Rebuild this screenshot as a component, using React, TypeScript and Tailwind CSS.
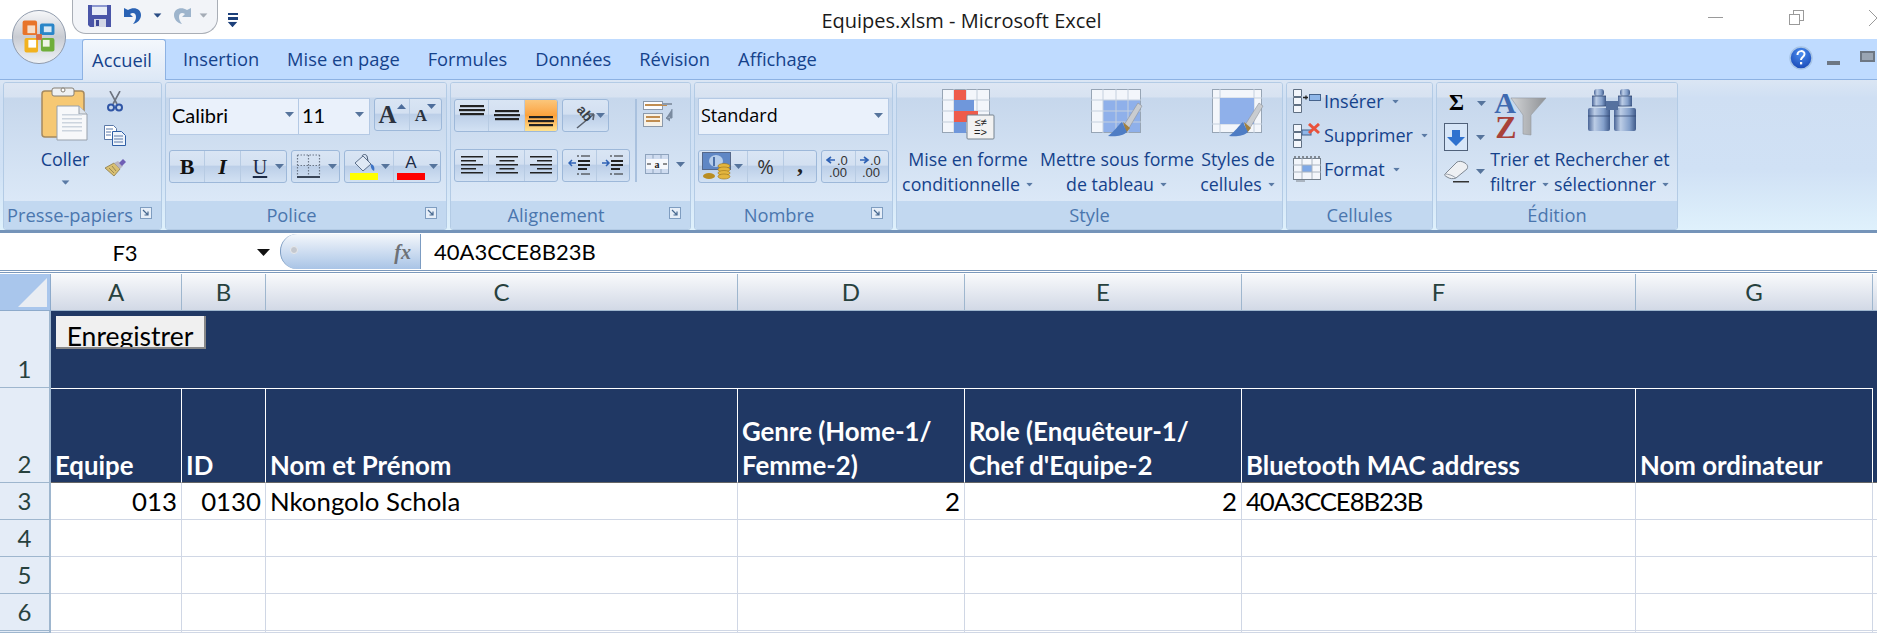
import React from 'react';

const Caret = ({ color = '#56749c', className = '' }: { color?: string; className?: string }) => (
  <svg width="9" height="5" viewBox="0 0 9 5" className={`shrink-0 ${className}`}>
    <path d="M0 0h9L4.500 5z" fill={color} />
  </svg>
);

const Launcher = () => (
  <svg width="12" height="12" viewBox="0 0 12 12" className="shrink-0 -mt-[5px]">
    <rect x="0.500" y="0.500" width="11" height="11" fill="#e6eef8" stroke="#7f9dc0" />
    <path d="M3 3l5 5M8 4.500V8H4.500" fill="none" stroke="#47688f" strokeWidth="1.200" />
  </svg>
);

const Group = ({ w, caption, left, launcher = true, children }: { w: string; caption: string; left?: boolean; launcher?: boolean; children: React.ReactNode }) => (
  <section className={`${w} h-[148px] shrink-0 flex flex-col rounded-[3px] border border-[#b3cbe5] overflow-hidden`}>
    <div className="h-[118px] shrink-0 bg-[linear-gradient(#dde6f3_0,#d7e2f1_14px,#c6d7ec_15px,#dbe8f7_100%)]">{children}</div>
    <div className={`flex-1 flex items-center bg-[#c2d8f0] text-[#4a76ae] text-[18.300px] ${left ? 'pl-[3px]' : launcher ? 'pl-[8px]' : 'pl-0'} ${launcher ? 'pr-[9px]' : 'pr-0'}`}>
      <span className={`flex-1 ${left ? 'text-left' : 'text-center'} ${launcher && !left ? 'pr-[16px]' : ''} whitespace-nowrap`}>{caption}</span>
      {launcher && <Launcher />}
    </div>
  </section>
);

const ButtonGroup = ({ w, children }: { w: string; children: React.ReactNode }) => (
  <div className={`${w} h-[33px] shrink-0 flex rounded-[3px] border border-[#9db8d9] overflow-hidden bg-[linear-gradient(#d9e5f4_0,#d3e0f1_45%,#bccfe8_50%,#d2e1f3_100%)]`}>
    {children}
  </div>
);

const Seg = ({ className = '', children }: { className?: string; children?: React.ReactNode }) => (
  <div className={`h-full flex items-center justify-center border-r border-[#b7cbe3] last:border-r-0 ${className}`}>{children}</div>
);

const Lines = ({ align = 'left', gap = 4, y = 1 }: { align?: 'left' | 'center' | 'right'; gap?: number; y?: number }) => {
  const widths = [22, 15, 22, 15, 22];
  return (
    <svg width="24" height="22" viewBox="0 0 24 22">
      {widths.map((lw, i) => {
        const x = align === 'left' ? 1 : align === 'right' ? 23 - lw : 12 - lw / 2;
        return <rect key={i} x={x} y={y + i * gap} width={lw} height="1.500" fill="#222" />;
      })}
    </svg>
  );
};

const VAlign = ({ top }: { top: number }) => (
  <svg width="26" height="24" viewBox="0 0 26 24">
    {[0, 1, 2].map((i) => (
      <rect key={i} x={i === 1 ? 0 : 1} y={top + i * 4} width={i === 1 ? 26 : 24} height="2.200" fill="#222" />
    ))}
  </svg>
);

const OrbIcon = () => (
  <svg width="56" height="56" viewBox="0 0 58 58">
    <defs>
      <linearGradient id="orb" x1="0" y1="0" x2="0" y2="1">
        <stop offset="0" stopColor="#f7f8fa" />
        <stop offset="0.5" stopColor="#c9ccd3" />
        <stop offset="1" stopColor="#eef2f7" />
      </linearGradient>
    </defs>
    <circle cx="29" cy="29" r="27.500" fill="url(#orb)" stroke="#8d98aa" />
    <rect x="12" y="12" width="15" height="15" rx="2" fill="#e8742a" />
    <rect x="17" y="17" width="8" height="8" fill="#f6ddc8" />
    <rect x="30" y="15" width="15" height="12" rx="2" fill="#2a86c8" />
    <rect x="34" y="18" width="8" height="6" fill="#d8e8f4" />
    <rect x="14" y="30" width="14" height="15" rx="2" fill="#f2b21f" />
    <rect x="18" y="32" width="8" height="8" fill="#fff" />
    <rect x="31" y="30" width="14" height="14" rx="2" fill="#6fae3a" />
    <rect x="33" y="32" width="7" height="7" fill="#eef5e6" />
    <rect x="26" y="26" width="6" height="6" fill="#d96a40" />
  </svg>
);

const SaveIcon = () => (
  <svg width="23" height="23" viewBox="0 0 23 23">
    <path d="M0 1h23v22H2l-2-2z" fill="#4a55a8" />
    <rect x="4" y="1" width="15" height="10" fill="#e8edf6" />
    <rect x="4" y="1" width="15" height="2" fill="#8d98d0" />
    <rect x="6" y="15" width="12" height="8" fill="#d2d6e6" />
    <rect x="8" y="16" width="3" height="6" fill="#3d4796" />
  </svg>
);

const UndoIcon = ({ color = '#2a62b4' }: { color?: string }) => (
  <svg width="19" height="19" viewBox="0 0 19 19">
    <path d="M1 2v9h9L7 8c3-2 6-1 6 3 0 2-1 5-3 7 5-1 8-5 8-9 0-6-7-9-13-5z" fill={color} />
  </svg>
);

const UndoIconMirror = () => (
  <div className="-scale-x-100"><UndoIcon color="#9db4cc" /></div>
);

const PasteIcon = () => (
  <svg width="48" height="54" viewBox="0 0 48 54">
    <rect x="1" y="4" width="42" height="46" rx="3" fill="#f6c873" stroke="#a5895f" strokeWidth="1.500" />
    <rect x="11" y="1" width="22" height="8" rx="2" fill="#eef0f2" stroke="#857f74" />
    <circle cx="22" cy="3" r="2" fill="#fff" stroke="#857f74" />
    <path d="M16 19h22l8 8v26H16z" fill="#f7f8fa" stroke="#97a0ab" />
    <path d="M38 19v8h8" fill="#dfe4ea" stroke="#97a0ab" />
    {[27, 31, 35, 39, 43].map((y) => (
      <rect key={y} x="21" y={y} width="20" height="1.500" fill="#ccd4de" />
    ))}
  </svg>
);

const Scissors = () => (
  <svg width="16" height="21" viewBox="0 0 16 21">
    <path d="M3 0l7 13M13 0L6 13" stroke="#6d7480" strokeWidth="1.600" fill="none" />
    <circle cx="4" cy="16.500" r="3" fill="none" stroke="#2f55a5" strokeWidth="2" />
    <circle cx="12" cy="16.500" r="3" fill="none" stroke="#2f55a5" strokeWidth="2" />
  </svg>
);

const CopyIcon = () => (
  <svg width="22" height="21" viewBox="0 0 22 21">
    <path d="M.5.5h9l3 3v11H.5z" fill="#fff" stroke="#5b79a8" />
    <path d="M8.500 6.500h9l4 4v10h-13z" fill="#eef4fb" stroke="#2f5fa6" />
    <path d="M2 4h7M2 7h5M2 10h5M10 11h9M10 14h9M10 17h9" stroke="#5b79a8" />
  </svg>
);

const PainterIcon = () => (
  <svg width="21" height="18" viewBox="0 0 21 18">
    <path d="M0 9l9-5 6 6-6 7z" fill="#d8bf72" stroke="#8b7a48" strokeWidth=".800" />
    <path d="M9 4l6 6 3-3-5-5z" fill="#b9b6c4" />
    <path d="M14 4l4-4 3 3-4 4z" fill="#6f5fb5" />
    <path d="M4 9l5 5M7 7l4 5" stroke="#8b7a48" strokeWidth=".800" />
  </svg>
);

const BordersIcon = () => (
  <svg width="25" height="25" viewBox="0 0 25 25">
    <path d="M1.500 1h22M1.500 11.500h22M1.500 1v21M12.500 1v21M23.500 1v21" stroke="#6b7686" strokeWidth="1.200" strokeDasharray="1.500 1.500" fill="none" />
    <rect x="1" y="22" width="23" height="2" fill="#3a4658" />
  </svg>
);

const FillIcon = () => (
  <svg width="29" height="26" viewBox="0 0 29 26">
    <path d="M5 9l8-7 8 8-8 7z" fill="#dfe8f4" stroke="#5b6f8b" />
    <path d="M12 2c1-2 4-2 5 0l1 5" fill="none" stroke="#4c5d75" />
    <path d="M21 10c3 1 4 4 3 7-2-1-4-4-3-7z" fill="#3d73c5" />
    <rect y="19" width="28" height="7" fill="#ffff00" />
  </svg>
);

const FontColorIcon = () => (
  <svg width="29" height="7" viewBox="0 0 29 7" className="mt-[1px]">
    <rect width="28" height="7" fill="#ff0000" />
  </svg>
);

const OrientIcon = () => (
  <svg width="28" height="30" viewBox="0 -2 28 30">
    <path d="M10 25L27 11M27 11h-6M27 11l-1 6" stroke="#58616e" strokeWidth="1.600" fill="none" />
    <text x="0" y="0" transform="translate(9 7) rotate(50)" fontSize="14" fontWeight="700" fontFamily="Liberation Sans, sans-serif" fill="#3a3f47">ab</text>
  </svg>
);

const WrapIcon = () => (
  <svg width="30" height="28" viewBox="0 0 30 28">
    <rect x="0.500" y="2.500" width="19" height="8" fill="#fbfcfe" stroke="#8b99ab" />
    <rect x="2" y="5" width="22" height="2" fill="#c08d51" />
    <path d="M19 5h10" stroke="#8b99ab" strokeWidth="2" />
    <rect x="0.500" y="14.500" width="19" height="13" fill="#f7f2e8" stroke="#8b99ab" />
    <path d="M3 18h14M3 22h14" stroke="#c08d51" strokeWidth="2" />
    <path d="M29 10v9h-6M27 17l-4 2 4 3" fill="#7b8ba0" stroke="#7b8ba0" />
  </svg>
);

const MergeIcon = () => (
  <svg width="24" height="20" viewBox="0 0 24 20">
    <rect x="0.500" y="0.500" width="23" height="19" fill="#f6f8fc" stroke="#8ea3bd" />
    <rect x="1" y="1" width="22" height="4" fill="#cfdcf0" />
    <rect x="1" y="15" width="22" height="4" fill="#cfdcf0" />
    <path d="M8 .5v4M16 .5v4M8 15v4M16 15v4" stroke="#8ea3bd" />
    <text x="12" y="13.500" textAnchor="middle" fontSize="10" fontWeight="700" fontFamily="Liberation Serif, serif" fill="#222">a</text>
    <path d="M2 10h4M22 10h-4" stroke="#222" />
  </svg>
);

const CurrencyIcon = () => (
  <svg width="29" height="29" viewBox="0 0 29 29">
    <rect x="0.500" y="0.500" width="28" height="17" fill="#5f87c5" stroke="#55688a" />
    <ellipse cx="14" cy="9" rx="7" ry="6" fill="#b5cdeb" />
    <rect x="11" y="5" width="2" height="9" fill="#4b70a8" />
    <ellipse cx="7" cy="24" rx="6" ry="3" fill="#b98d22" />
    {[14, 17.500, 21, 24.500].map((y) => (
      <ellipse key={y} cx="22" cy={y} rx="6" ry="2.500" fill="#e3b53e" stroke="#9a741c" strokeWidth=".600" />
    ))}
  </svg>
);

const DecimalIcon = ({ more }: { more: boolean }) => (
  <svg width="26" height="25" viewBox="0 0 26 25">
    <path d={more ? 'M1 6h8M5 3L1 6l4 3' : 'M1 6h8M5 3l4 3-4 3'} fill="none" stroke="#2f62b5" strokeWidth="1.600" />
    <text x="11" y="11" fontSize="13" fontFamily="Liberation Sans, sans-serif" fill="#333">.0</text>
    <text x="3" y="23" fontSize="13" fontFamily="Liberation Sans, sans-serif" fill="#333">.00</text>
  </svg>
);

const ConditionalIcon = () => (
  <svg width="53" height="51" viewBox="0 0 53 51">
    <rect x="0.500" y="0.500" width="47" height="43" fill="#f3f6fb" stroke="#97a5b5" />
    <path d="M0 11h48M0 22h48M0 33h48M12 0v44M24 0v44M35 0v44" stroke="#c1ccd9" />
    <rect x="12" y="1" width="12" height="10" fill="#ee5b4a" />
    <rect x="12" y="11" width="20" height="11" fill="#6f97db" />
    <rect x="12" y="22" width="24" height="11" fill="#ee5b4a" />
    <rect x="12" y="33" width="12" height="11" fill="#6f97db" />
    <rect x="25" y="26" width="27" height="24" rx="1" fill="#f2f2f2" stroke="#75828f" />
    <text x="38.500" y="37" textAnchor="middle" fontSize="11" fontFamily="Liberation Sans, sans-serif" fill="#222">≤≠</text>
    <text x="38.500" y="47" textAnchor="middle" fontSize="11" fontFamily="Liberation Sans, sans-serif" fill="#222">=&gt;</text>
  </svg>
);

const Brush = () => (
  <>
    <path d="M33 36l14-22 4 3-13 22z" fill="#c9ccd0" stroke="#8e949b" strokeWidth=".600" />
    <path d="M32 33l7 6-4 5z" fill="#a2803e" />
    <path d="M31 33c-4 3-8 10-14 14 7 1 15 0 19-4z" fill="#4f7dc4" />
  </>
);

const TableIcon = () => (
  <svg width="53" height="51" viewBox="0 0 53 51">
    <rect x="0.500" y="0.500" width="49" height="43" fill="#f3f6fb" stroke="#97a5b5" />
    <rect x="12" y="11" width="37" height="32" fill="#8fb0ea" />
    <path d="M0 11h50M0 22h50M0 33h50M12 0v44M25 0v44M37 0v44" stroke="#c5d0de" />
    <Brush />
  </svg>
);

const CellStyleIcon = () => (
  <svg width="53" height="51" viewBox="0 0 53 51">
    <rect x="0.500" y="0.500" width="49" height="43" fill="#f3f6fb" stroke="#97a5b5" />
    <path d="M0 9h50M0 35h50M8 0v44M42 0v44" stroke="#c5d0de" />
    <rect x="8" y="9" width="34" height="26" fill="#8fb0ea" />
    <Brush />
  </svg>
);

const InsertIcon = () => (
  <svg width="28" height="25" viewBox="0 0 28 25">
    <path d="M.5.500h8v7h-8zM.5 8.500h8v7h-8zM.5 16.500h8v7h-8z" fill="#f3f6fb" stroke="#5f6f82" />
    <rect x="16.500" y="5.500" width="11" height="6" fill="#8fb6e8" stroke="#45638c" />
    <path d="M10 8.500h5M13 6.500v4" stroke="#222" strokeWidth="1.300" />
  </svg>
);

const DeleteIcon = () => (
  <svg width="28" height="25" viewBox="0 0 28 25">
    <path d="M.5 1.500h8v7h-8zM.5 9.500h8v7h-8zM.5 17.500h8v7h-8z" fill="#f3f6fb" stroke="#5f6f82" />
    <rect x="9" y="7" width="9" height="5" fill="#8fb6e8" stroke="#45638c" />
    <path d="M16 1l10 9M26 1l-10 9" stroke="#e9523c" strokeWidth="3" />
  </svg>
);

const FormatIcon = () => (
  <svg width="28" height="28" viewBox="0 0 28 28">
    <rect x="0.500" y="3.500" width="27" height="21" fill="#f3f6fb" stroke="#737f8c" />
    <rect x="9" y="10" width="10" height="7" fill="#7ea8e6" />
    <path d="M0 10h28M0 17h28M9 3v21M19 3v21" stroke="#aab4c0" />
    <path d="M1 2h26" stroke="#333" strokeDasharray="2 2" />
    <path d="M3 25h9v2H3z" fill="#aab4c0" />
  </svg>
);

const FillDownIcon = () => (
  <svg width="24" height="28" viewBox="0 0 24 28">
    <rect x="0.500" y="0.500" width="23" height="27" fill="#d7e6f8" stroke="#50617a" />
    <path d="M8 7h8v7h5l-9 9-9-9h5z" fill="#2f72cf" />
  </svg>
);

const EraserIcon = () => (
  <svg width="25" height="23" viewBox="0 0 25 23">
    <path d="M1 14L13 2c2-1 5-1 8 1s3 4 2 6L12 18c-3 1-6 1-9-1s-3-2-2-3z" fill="#eef0f3" stroke="#7e8792" />
    <path d="M1 14c3 0 7 1 11 4" fill="none" stroke="#9aa3ae" />
    <rect x="9" y="21" width="16" height="1.500" fill="#333" />
  </svg>
);

const SortIcon = () => (
  <svg width="53" height="60" viewBox="0 -3 53 60" className="-mt-[3px]">
    <defs>
      <linearGradient id="funnel" x1="0" y1="0" x2="1" y2="0">
        <stop offset="0" stopColor="#d2d4d6" />
        <stop offset="1" stopColor="#8f9296" />
      </linearGradient>
    </defs>
    <path d="M17 9h35L37 26v20l-8-1V26z" fill="url(#funnel)" stroke="#94989d" strokeWidth=".600" />
    <text x="11" y="24" textAnchor="middle" fontSize="30" fontWeight="700" fontFamily="Liberation Serif, serif" fill="#3f6ab0">A</text>
    <text x="12" y="49" textAnchor="middle" fontSize="32" fontWeight="700" fontFamily="Liberation Serif, serif" fill="#a8423a">Z</text>
  </svg>
);

const BinocularsIcon = () => (
  <svg width="48" height="42" viewBox="0 0 48 42">
    <defs>
      <linearGradient id="bino" x1="0" y1="0" x2="1" y2="0">
        <stop offset="0" stopColor="#4a6597" />
        <stop offset="0.3" stopColor="#bccde6" />
        <stop offset="0.7" stopColor="#84a0cb" />
        <stop offset="1" stopColor="#3f5a8a" />
      </linearGradient>
    </defs>
    {[0, 26].map((x) => (
      <g key={x} transform={`translate(${x} 0)`}>
        <rect x="6" y="0" width="10" height="7" rx="3" fill="url(#bino)" />
        <rect x="4" y="7" width="14" height="10" fill="url(#bino)" />
        <rect x="0" y="19" width="22" height="23" rx="2" fill="url(#bino)" />
        <path d="M4 7h14M4 17h14M0 27h22" stroke="#2f456e" strokeWidth="1.200" opacity=".750" />
      </g>
    ))}
    <rect x="18" y="12" width="12" height="9" fill="#55719f" />
  </svg>
);

const HelpIcon = () => (
  <svg width="24" height="24" viewBox="0 0 24 24">
    <defs>
      <radialGradient id="help" cx="0.500" cy="0.300" r="0.800">
        <stop offset="0" stopColor="#4b8ef0" />
        <stop offset="1" stopColor="#123fae" />
      </radialGradient>
    </defs>
    <circle cx="12" cy="12" r="11" fill="url(#help)" stroke="#a7c4e6" strokeWidth="1.500" />
    <path d="M8.500 9c0-5 7-5 7-1 0 3-3.500 3-3.500 6" fill="none" stroke="#fff" strokeWidth="2" />
    <rect x="11" y="16" width="2.200" height="2.400" fill="#fff" />
  </svg>
);

const LabelButton = ({ w, icon, lines }: { w: string; icon: React.ReactNode; lines: [string, string] }) => (
  <div className={`${w} shrink-0 flex flex-col items-center text-[#15428b] text-[17.800px] leading-[25px] whitespace-nowrap`}>
    <div className="h-[63px] pt-[6px]">{icon}</div>
    <div className="mt-[1px]">{lines[0]}</div>
    <div className="flex items-center gap-[5px]">
      {lines[1]}
      <Caret color="#5a7aa5" className="scale-75" />
    </div>
  </div>
);

const CellAction = ({ icon, label }: { icon: React.ReactNode; label: string }) => (
  <div className="h-[34px] flex items-center gap-[3px] text-[#15428b] text-[18px] whitespace-nowrap">
    <div className="w-[28px] flex justify-center">{icon}</div>
    {label}
    <Caret color="#5a7aa5" className="ml-[4px] scale-75" />
  </div>
);

const tabs = ['Insertion', 'Mise en page', 'Formules', 'Données', 'Révision', 'Affichage'];

const columns = ['A', 'B', 'C', 'D', 'E', 'F', 'G'];

const headers: string[][] = [
  ['Equipe'],
  ['ID'],
  ['Nom et Prénom'],
  ['Genre (Home-1/', 'Femme-2)'],
  ['Role (Enquêteur-1/', "Chef d'Equipe-2"],
  ['Bluetooth MAC address'],
  ['Nom ordinateur'],
];

const rowCells = [
  { text: '013', right: true },
  { text: '0130', right: true },
  { text: 'Nkongolo Schola', right: false },
  { text: '2', right: true },
  { text: '2', right: true },
  { text: '40A3CCE8B23B', right: false, tight: true },
  { text: '', right: false },
];

const RowHead = ({ label, className = '' }: { label?: string; className?: string }) => (
  <div className={`bg-[#e4ecf7] border-r-2 border-r-[#9eb6ce] border-b border-b-[#9eb6ce] flex items-end justify-center text-[#27413e] text-[24px] leading-[36px] ${className}`}>
    {label}
  </div>
);

const App = () => {
  return (
    <div className="w-[1877px] h-[633px] overflow-hidden bg-white flex flex-col relative font-['Open_Sans',sans-serif]">
      {/* title bar */}
      <div className="h-[39px] shrink-0 flex items-start relative">
        <div className="ml-[72px] w-[146px] h-[34px] shrink-0 flex items-center gap-[6px] pl-[15px] pb-[3px] bg-[#f2f4f8] border border-t-0 border-[#a9aeb6] rounded-b-[14px] rounded-br-[16px]">
          <SaveIcon />
          <div className="ml-[6px]"><UndoIcon /></div>
          <Caret color="#2a4d85" className="ml-[5px] scale-90" />
          <div className="ml-[5px]"><UndoIconMirror /></div>
          <Caret color="#a5acb6" className="ml-[1px] scale-90" />
        </div>
        <div className="ml-[9px] mt-[13px] w-[11px] flex flex-col gap-[2px] items-center">
          <div className="w-[10px] h-[2px] bg-[#1c3f7a]" />
          <div className="w-[10px] h-[3px] bg-[#1c3f7a]" />
          <Caret color="#1c3f7a" className="scale-110" />
        </div>
        <div className="flex-1 text-center text-[20px] leading-[41px] text-[#1a1a1a] pr-[192px]">Equipes.xlsm - Microsoft Excel</div>
        <div className="absolute left-[1708px] top-[17px] w-[15px] h-px bg-[#9a9a9a]" />
        <div className="absolute left-[1789px] top-[10px] w-[15px] h-[15px]">
          <div className="absolute right-0 top-0 w-[11px] h-[11px] border border-[#9a9a9a]" />
          <div className="absolute left-0 bottom-0 w-[11px] h-[11px] border border-[#9a9a9a] bg-white" />
        </div>
        <svg width="8" height="16" viewBox="0 0 8 16" className="absolute left-[1869px] top-[10px]">
          <path d="M0 0l8 8M0 16l8-8" stroke="#9a9a9a" />
        </svg>
      </div>

      {/* office button */}
      <div className="absolute left-[11px] top-[9px] z-10"><OrbIcon /></div>

      {/* tabs */}
      <div className="h-[41px] shrink-0 bg-[#bfdbff] border-b border-[#8db2e3] flex items-end pl-[82px] text-[18.300px] text-[#15428b] relative">
        <div className="w-[84px] h-[41px] -mb-px mt-[1px] pr-[4px] flex items-center justify-center rounded-t-[3px] border border-b-0 border-[#8db2e3] bg-linear-to-b from-[#f3f7fc] to-[#dde8f6]">Accueil</div>
        <div className="flex pl-[3px]">
          {tabs.map((tab) => (
            <div key={tab} className="h-[40px] px-[14px] flex items-center whitespace-nowrap">{tab}</div>
          ))}
        </div>
        <div className="absolute left-[1789px] top-[7px]"><HelpIcon /></div>
        <div className="absolute left-[1827px] top-[22px] w-[13px] h-[4px] bg-[#6d7784]" />
        <div className="absolute left-[1860px] top-[12px] w-[15px] h-[11px] border-2 border-[#6d7784] bg-[#9aa5b3]" />
      </div>

      {/* ribbon */}
      <div className="h-[153px] shrink-0 flex gap-[3px] pl-[3px] pt-[2px] bg-[linear-gradient(#dbe6f4_0,#cfdff3_12%,#d0e1f5_60%,#dff1fc_100%)] border-b-[3px] border-[#7594b9]">
        <Group w="w-[159px]" caption="Presse-papiers" left>
          <div className="flex h-full">
            <div className="w-[100px] flex flex-col items-center pt-[4px] pl-[22px] text-[18px] text-[#15428b]">
              <PasteIcon />
              <div className="mt-[6px] leading-[25px]">Coller</div>
              <Caret color="#5a7aa5" className="mt-[8px] scale-90" />
            </div>
            <div className="flex flex-col items-center pt-[8px] gap-[13px]">
              <Scissors />
              <CopyIcon />
              <PainterIcon />
            </div>
          </div>
        </Group>

        <Group w="w-[282px]" caption="Police">
          <div className="pt-[15px] pl-[3px]">
            <div className="flex h-[37px] items-start">
              <div className="w-[130px] h-[37px] bg-[#eaf1fb] border border-[#b4c9e4] flex items-center pl-[2px] pr-[4px] pb-[4px] text-black text-[20px] font-['Lato',sans-serif]">
                <span className="flex-1">Calibri</span>
                <Caret />
              </div>
              <div className="w-[71px] h-[37px] bg-[#eaf1fb] border border-l-0 border-[#b4c9e4] flex items-center pl-[3px] pr-[5px] pb-[4px] text-black text-[20px] font-['Lato',sans-serif]">
                <span className="flex-1">11</span>
                <Caret />
              </div>
              <div className="ml-[4px]">
                <ButtonGroup w="w-[68px]">
                  <Seg className="w-[35px]">
                    <span className="font-['Liberation_Serif',serif] font-bold text-[25px] text-[#2b3340]">A</span>
                    <Caret color="#4d6d9b" className="rotate-180 -mt-[16px]" />
                  </Seg>
                  <Seg className="flex-1">
                    <span className="font-['Liberation_Serif',serif] font-bold text-[17px] text-[#2b3340] mt-[3px]">A</span>
                    <Caret color="#4d6d9b" className="-mt-[16px]" />
                  </Seg>
                </ButtonGroup>
              </div>
            </div>
            <div className="flex gap-[4px] mt-[15px] items-center">
              <ButtonGroup w="w-[118px]">
                <Seg className="w-[35px] font-['Liberation_Serif',serif] font-bold text-[22px] text-[#111]">B</Seg>
                <Seg className="w-[36px] font-['Liberation_Serif',serif] font-bold italic text-[22px] text-[#111]">I</Seg>
                <Seg className="flex-1 gap-[8px] pl-[10px] font-['Liberation_Serif',serif] text-[20px] text-[#1c2b46]">
                  <span className="underline underline-offset-2">U</span>
                  <Caret />
                </Seg>
              </ButtonGroup>
              <ButtonGroup w="w-[49px]">
                <Seg className="flex-1 gap-[7px] pl-[1px]">
                  <BordersIcon />
                  <Caret />
                </Seg>
              </ButtonGroup>
              <ButtonGroup w="w-[97px]">
                <Seg className="w-[49px] gap-[3px] pl-[2px]">
                  <FillIcon />
                  <Caret className="-ml-px" />
                </Seg>
                <Seg className="flex-1 gap-[3px]">
                  <div className="flex flex-col items-center w-[29px]">
                    <span className="font-['Liberation_Sans',sans-serif] text-[17px] leading-[18px] text-[#1c2b46]">A</span>
                    <FontColorIcon />
                  </div>
                  <Caret />
                </Seg>
              </ButtonGroup>
            </div>
          </div>
        </Group>

        <Group w="w-[241px]" caption="Alignement">
          <div className="flex pt-[16px] pl-[3px]">
            <div className="flex flex-col gap-[17px]">
              <div className="flex gap-[4px]">
                <ButtonGroup w="w-[104px]">
                  <Seg className="w-[34px]"><VAlign top={1} /></Seg>
                  <Seg className="w-[36px]"><VAlign top={6} /></Seg>
                  <Seg className="flex-1 bg-linear-to-b from-[#fbc67a] via-[#fba23c] to-[#fde28f]"><VAlign top={12} /></Seg>
                </ButtonGroup>
                <ButtonGroup w="w-[47px]">
                  <Seg className="flex-1 gap-[1px]">
                    <OrientIcon />
                    <Caret />
                  </Seg>
                </ButtonGroup>
              </div>
              <div className="flex gap-[4px]">
                <ButtonGroup w="w-[104px]">
                  <Seg className="w-[34px]"><Lines align="left" /></Seg>
                  <Seg className="w-[36px]"><Lines align="center" /></Seg>
                  <Seg className="flex-1"><Lines align="right" /></Seg>
                </ButtonGroup>
                <ButtonGroup w="w-[68px]">
                  <Seg className="w-[34px]">
                    <svg width="24" height="22" viewBox="0 0 24 22">
                      <path d="M1 8h7M4 5L1 8l3 3" fill="none" stroke="#2f62b5" strokeWidth="1.500" />
                      <path d="M9 1h2M9 19h2M13 1h9M13 19h9" stroke="#222" />
                      <rect x="10" y="5" width="12" height="2" fill="#222" />
                      <rect x="10" y="9" width="12" height="2" fill="#222" />
                      <rect x="10" y="13" width="9" height="2" fill="#222" />
                    </svg>
                  </Seg>
                  <Seg className="flex-1">
                    <svg width="24" height="22" viewBox="0 0 24 22">
                      <path d="M1 8h7M5 5l3 3-3 3" fill="none" stroke="#2f62b5" strokeWidth="1.500" />
                      <path d="M9 1h2M9 19h2M13 1h9M13 19h9" stroke="#222" />
                      <rect x="10" y="5" width="12" height="2" fill="#222" />
                      <rect x="10" y="9" width="12" height="2" fill="#222" />
                      <rect x="10" y="13" width="9" height="2" fill="#222" />
                    </svg>
                  </Seg>
                </ButtonGroup>
              </div>
            </div>
            <div className="ml-[5px] w-[2px] h-[83px] bg-[#a9c1de]" />
            <div className="ml-[6px] flex flex-col">
              <WrapIcon />
              <div className="flex items-center gap-[7px] mt-[27px] pl-[2px]">
                <MergeIcon />
                <Caret />
              </div>
            </div>
          </div>
        </Group>

        <Group w="w-[199px]" caption="Nombre">
          <div className="pt-[15px] pl-[3px]">
            <div className="w-[191px] h-[37px] bg-[#eaf1fb] border border-[#b4c9e4] flex items-center pl-[2px] pr-[5px] pb-[2px] text-black text-[18px]">
              <span className="flex-1">Standard</span>
              <Caret />
            </div>
            <div className="flex gap-[4px] mt-[15px]">
              <ButtonGroup w="w-[119px]">
                <Seg className="w-[49px] gap-[3px] justify-start pl-[3px]">
                  <CurrencyIcon />
                  <Caret />
                </Seg>
                <Seg className="w-[36px] text-[20px] text-[#333]">%</Seg>
                <Seg className="flex-1 font-['Liberation_Serif',serif] font-bold text-[24px] text-[#222] pb-[6px]">,</Seg>
              </ButtonGroup>
              <ButtonGroup w="w-[68px]">
                <Seg className="w-[34px]"><DecimalIcon more /></Seg>
                <Seg className="flex-1"><DecimalIcon more={false} /></Seg>
              </ButtonGroup>
            </div>
          </div>
        </Group>

        <Group w="w-[387px]" caption="Style" launcher={false}>
          <div className="flex pl-[3px]">
            <LabelButton w="w-[136px]" icon={<ConditionalIcon />} lines={['Mise en forme', 'conditionnelle']} />
            <LabelButton w="w-[162px]" icon={<TableIcon />} lines={['Mettre sous forme', 'de tableau']} />
            <LabelButton w="w-[80px]" icon={<CellStyleIcon />} lines={['Styles de', 'cellules']} />
          </div>
        </Group>

        <Group w="w-[147px]" caption="Cellules" launcher={false}>
          <div className="pt-[1px] pl-[6px]">
            <CellAction icon={<InsertIcon />} label="Insérer" />
            <CellAction icon={<DeleteIcon />} label="Supprimer" />
            <CellAction icon={<FormatIcon />} label="Format" />
          </div>
        </Group>

        <Group w="w-[242px]" caption="Édition" launcher={false}>
          <div className="flex">
            <div className="w-[52px] shrink-0 flex flex-col gap-[8px] pt-[8px] pl-[7px]">
              <div className="h-[24px] flex items-center">
                <span className="w-[25px] text-center font-['Liberation_Serif',serif] font-bold text-[23px] text-black">Σ</span>
                <Caret className="ml-[8px]" />
              </div>
              <div className="h-[28px] flex items-center">
                <FillDownIcon />
                <Caret className="ml-[8px]" />
              </div>
              <div className="h-[24px] flex items-center">
                <EraserIcon />
                <Caret className="ml-[7px]" />
              </div>
            </div>
            <LabelButton w="w-[62px]" icon={<SortIcon />} lines={['Trier et', 'filtrer']} />
            <LabelButton w="w-[122px]" icon={<BinocularsIcon />} lines={['Rechercher et', 'sélectionner']} />
          </div>
        </Group>
      </div>

      {/* formula bar */}
      <div className="h-[41px] shrink-0 pt-px">
        <div className="h-[36px] flex text-[22px] text-black font-['Lato',sans-serif]">
          <div className="w-[280px] shrink-0 flex items-center">
            <span className="w-[250px] text-center">F3</span>
            <svg width="13" height="7" viewBox="0 0 13 7" className="ml-[7px]"><path d="M0 0h13L6.500 7z" fill="#111" /></svg>
          </div>
          <div className="w-[141px] shrink-0 h-[35px] rounded-l-[17px] border-l border-r border-[#7c9cc2] bg-linear-to-b from-[#f4f7fb] to-[#a9c4e6] flex items-center justify-between px-[9px]">
            <div className="w-[8px] h-[8px] rounded-full bg-[#c4c8cf] border border-[#e7e9ec] -mt-[4px]" />
            <span className="font-['Liberation_Serif',serif] italic font-bold text-[20px] text-[#6d7177]">fx</span>
          </div>
          <div className="pl-[13px] leading-[35px]">40A3CCE8B23B</div>
        </div>
        <div className="h-[3px] border-t border-b border-[#7b98bb]" />
      </div>

      {/* sheet */}
      <div className="flex-1 min-h-0 grid grid-cols-[51px_131px_84px_472px_227px_277px_394px_237px_4px] grid-rows-[37px_77px_95px_37px_37px_37px_37px] text-[25.800px] font-['Lato',sans-serif] overflow-hidden">
        <div className="bg-[#a9c6ec] border-r border-b border-[#8daacb] flex items-end justify-end p-[3px]">
          <svg width="29" height="29" viewBox="0 0 29 29"><path d="M29 0v29H0z" fill="#e9edf3" /></svg>
        </div>
        {columns.map((col) => (
          <div key={col} className="bg-linear-to-b from-[#f8f9fb] to-[#d2d9e6] border-r border-r-[#9eb6ce] border-b border-b-[#9eb6ce] flex items-center justify-center text-[#27413e] text-[24px]">
            {col}
          </div>
        ))}
        <div className="bg-linear-to-b from-[#f8f9fb] to-[#d2d9e6] border-b border-b-[#9eb6ce]" />

        <RowHead label="1" />
        <div className="col-span-8 bg-[#203864] relative">
          <div className="absolute left-[5px] top-[5px] w-[150px] h-[33px] bg-[#f0f0f0] border-r-2 border-b-2 border-r-[#888] border-b-[#888] overflow-hidden flex justify-center text-[26.500px] leading-[41px] text-black whitespace-nowrap">
            Enregistrer
          </div>
        </div>

        <RowHead label="2" />
        {headers.map((lines) => (
          <div key={lines[0]} className="bg-[#203864] border-t border-r border-white pl-[4px] flex flex-col justify-end text-white font-bold leading-[34px] whitespace-nowrap border-b border-b-[#666]">
            {lines.map((line) => (
              <div key={line}>{line}</div>
            ))}
          </div>
        ))}
        <div className="bg-[#203864] border-b border-b-[#666]" />

        <RowHead label="3" />
        {rowCells.map((cell, i) => (
          <div key={i} className={`border-r border-b border-[#d0d7e5] px-[4px] flex items-center text-black whitespace-nowrap ${cell.right ? 'justify-end' : ''} ${cell.tight ? 'tracking-[-1.100px]' : ''}`}>
            {cell.text}
          </div>
        ))}
        <div className="border-b border-[#d0d7e5]" />

        {['4', '5', '6', ''].map((row) => (
          <React.Fragment key={row}>
            <RowHead label={row} />
            {columns.map((col) => (
              <div key={col} className="border-r border-b border-[#d0d7e5]" />
            ))}
            <div className="border-b border-[#d0d7e5]" />
          </React.Fragment>
        ))}
      </div>
    </div>
  );
};

export default App;
